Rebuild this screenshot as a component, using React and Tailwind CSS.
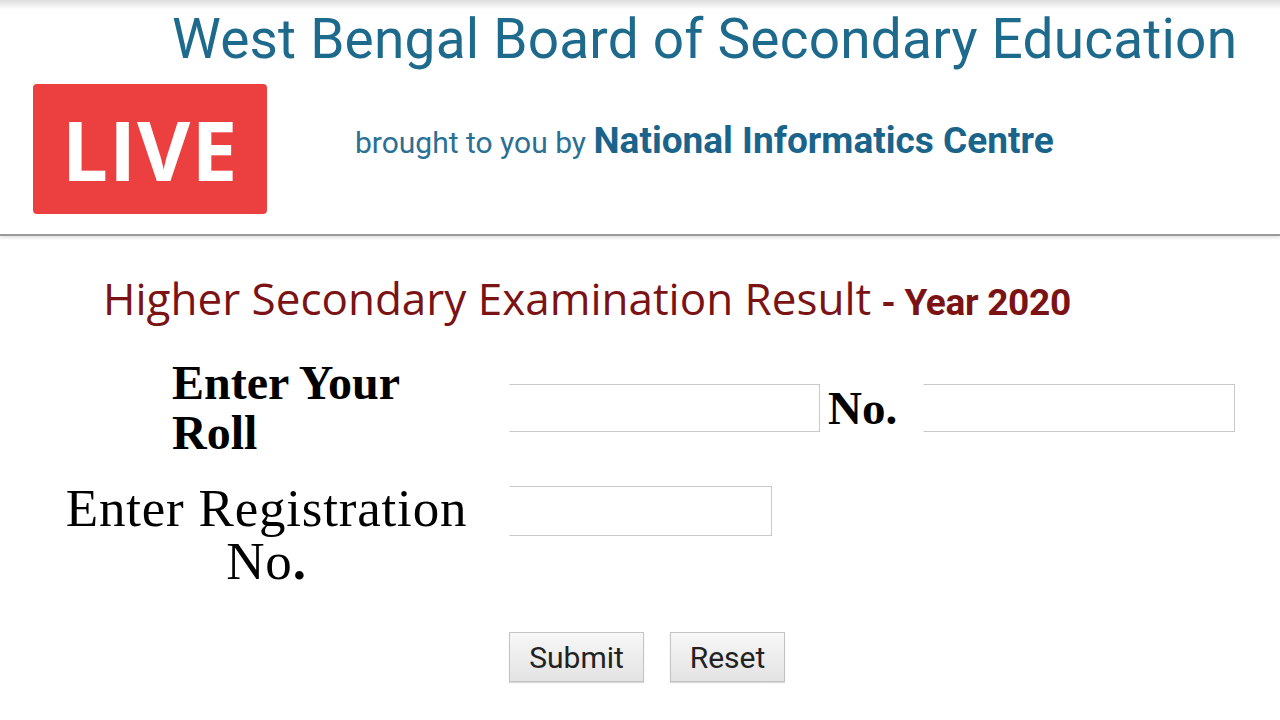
export default function App() {
  return (
    <div className="w-[1280px] h-[720px] bg-white overflow-hidden">
      {/* Header */}
      <header className="relative h-[236px] bg-gradient-to-b from-[#dcdcdc] via-white via-[4%] to-white border-b-2 border-[#9a9a9a] shadow-[0_2px_3px_rgba(0,0,0,0.12)]">
        <h1 className="pl-[172px] pt-[6px] text-[55px] leading-[66px] text-[#1d6a8c] font-['Roboto',sans-serif] tracking-[0.2px]">
          West Bengal Board of Secondary Education
        </h1>
        <div className="flex items-center mt-[12px]">
          <div className="ml-[33px] w-[234px] h-[130px] rounded-[4px] bg-[#ec4040] flex items-center justify-center">
            <span className="text-white text-[82px] font-bold font-['Open_Sans',sans-serif] tracking-[1px] leading-none">
              LIVE
            </span>
          </div>
          <p className="ml-[88px] -mt-[16px] text-[30px] text-[#2a7094] font-['Roboto',sans-serif]">
            brought to you by{" "}
            <span className="text-[37px] font-bold text-[#1a648c]">National Informatics Centre</span>
          </p>
        </div>
      </header>

      {/* Result form */}
      <main className="pt-[34px]">
        <h2 className="pl-[103px] text-[#7b1214] font-['Open_Sans',sans-serif] text-[44px] leading-[56px]">
          Higher Secondary Examination Result
          <span className="ml-[10px] text-[37px] font-bold font-['Roboto',sans-serif] tracking-[-0.3px]">- Year 2020</span>
        </h2>

        <div className="mt-[27px] flex items-center">
          <div className="w-[509px] pl-[172px] font-['Liberation_Serif',serif] font-bold text-[48px] leading-[50px] text-black">
            Enter Your
            <br />
            Roll
          </div>
          <input
            type="text"
            className="w-[311px] h-[48px] border border-[#c8c8c8] border-l-transparent bg-white"
          />
          <span className="ml-[8px] w-[95px] font-['Liberation_Serif',serif] font-bold text-[47px] text-black leading-none">
            No.
          </span>
          <input
            type="text"
            className="w-[312px] h-[48px] border border-[#c8c8c8] border-l-transparent bg-white"
          />
        </div>

        <div className="mt-[28px] flex items-start">
          <div className="ml-[64px] -mt-[4px] w-[405px] whitespace-nowrap text-center font-['Liberation_Serif',serif] text-[53px] leading-[52px] tracking-[0.8px] text-black">
            <div>Enter Registration</div>
            <div className="mt-[1px]">
              No<span className="font-bold">.</span>
            </div>
          </div>
          <input
            type="text"
            className="ml-[40px] w-[263px] h-[50px] border border-[#c8c8c8] border-l-transparent bg-white"
          />
        </div>

        <div className="mt-[45px] flex pl-[509px] gap-[26px]">
          <button className="w-[135px] h-[50px] border border-[#c4c4c4] bg-gradient-to-b from-[#f7f7f7] to-[#e3e3e3] text-[30px] text-[#222] font-['Roboto',sans-serif] shadow-[0_1px_1px_rgba(0,0,0,0.15)]">
            Submit
          </button>
          <button className="w-[115px] h-[50px] border border-[#c4c4c4] bg-gradient-to-b from-[#f7f7f7] to-[#e3e3e3] text-[30px] text-[#222] font-['Roboto',sans-serif] shadow-[0_1px_1px_rgba(0,0,0,0.15)]">
            Reset
          </button>
        </div>
      </main>
    </div>
  );
}
